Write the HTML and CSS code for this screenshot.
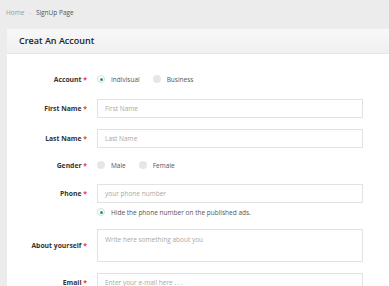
FILE: index.html
```html
<!DOCTYPE html>
<html lang="en">
<head>
    <meta charset="UTF-8">
    <meta name="viewport" content="width=device-width, initial-scale=1.0">
    <title>SignUp Page</title>
    <link rel="stylesheet" href="styles.css">
</head>
<body>
    <div class="breadcrumb">
        <a href="#">Home</a>
        <span class="sep">-</span>
        <span class="current">SignUp Page</span>
    </div>

    <div class="panel">
        <div class="panel-heading">Creat An Account</div>
        <div class="panel-body">
            <div class="form-row radio-row first">
                <label>Account <span class="req">*</span></label>
                <div class="options">
                    <span class="option"><span class="radio checked"></span>Indivisual</span>
                    <span class="option"><span class="radio"></span>Business</span>
                </div>
            </div>

            <div class="form-row">
                <label>First Name <span class="req">*</span></label>
                <input type="text" placeholder="First Name">
            </div>

            <div class="form-row last-name">
                <label>Last Name <span class="req">*</span></label>
                <input type="text" placeholder="Last Name">
            </div>

            <div class="form-row radio-row">
                <label>Gender <span class="req">*</span></label>
                <div class="options">
                    <span class="option"><span class="radio"></span>Male</span>
                    <span class="option"><span class="radio"></span>Female</span>
                </div>
            </div>

            <div class="form-row top">
                <label>Phone <span class="req">*</span></label>
                <div class="field">
                    <input type="text" placeholder="your phone number">
                    <div class="option hide-phone"><span class="radio checked"></span>Hide the phone number on the published ads.</div>
                </div>
            </div>

            <div class="form-row">
                <label>About yourself <span class="req">*</span></label>
                <textarea placeholder="Write here something about you"></textarea>
            </div>

            <div class="form-row">
                <label>Email <span class="req">*</span></label>
                <input type="text" placeholder="Enter your e-mail here . . .">
            </div>
        </div>
    </div>
</body>
</html>
```

FILE: styles.css
```css
body {
    margin: 0;
    background-color: #ececec;
    font-family: "Open Sans", Arial, sans-serif;
    color: #333;
    overflow: hidden;
}
.breadcrumb {
    height: 29px;
    padding-left: 6px;
    font-size: 6.5px;
    line-height: 25px;
    color: #555;
}
.breadcrumb a {
    color: #9a9a9a;
    text-decoration: none;
}
.breadcrumb .sep {
    color: #bbb;
    margin: 0 3px;
}
.panel {
    margin: 0 -20px 0 7px;
    background-color: white;
}
.panel-heading {
    height: 24px;
    line-height: 24px;
    padding-left: 12px;
    font-size: 9px;
    font-weight: 600;
    color: #222;
    background: linear-gradient(#f8f8f8, #f0f0f0);
    border-bottom: 1px solid #e6e6e6;
}
.panel-body {
    padding: 18px 0 20px;
}
.form-row {
    display: grid;
    grid-template-columns: 80px 266px;
    column-gap: 10px;
    align-items: center;
    margin-bottom: 11px;
}
.form-row label {
    text-align: right;
    font-size: 6.8px;
    font-weight: 700;
    color: #333;
}
.form-row.top {
    align-items: start;
    margin-bottom: 10px;
}
.form-row.top label {
    line-height: 19px;
}
.form-row.last-name {
    margin-bottom: 10px;
}
.req {
    color: #e53935;
}
.radio-row {
    height: 14px;
    margin-bottom: 12px;
}
.radio-row.first {
    margin-bottom: 13px;
}
input[type="text"], textarea {
    display: block;
    box-sizing: border-box;
    width: 100%;
    height: 19px;
    padding: 0 7px;
    border: 1px solid #e2e2e2;
    font-family: inherit;
    font-size: 6.5px;
    color: #555;
    outline: none;
}
textarea {
    height: 33px;
    padding-top: 5px;
    resize: none;
}
::placeholder {
    color: #a8a8a8;
}
.options {
    display: flex;
    gap: 13px;
}
.option {
    display: flex;
    align-items: center;
    gap: 6px;
    font-size: 6.5px;
    color: #555;
}
.radio {
    box-sizing: border-box;
    width: 8px;
    height: 8px;
    border-radius: 50%;
    background-color: #e6e6e6;
}
.radio.checked {
    background-color: white;
    border: 1px solid #dcdcdc;
    display: flex;
    align-items: center;
    justify-content: center;
}
.radio.checked::after {
    content: "";
    width: 3px;
    height: 3px;
    border-radius: 50%;
    background-color: #1a9f6c;
}
.hide-phone {
    margin-top: 2px;
    height: 14px;
}
```
